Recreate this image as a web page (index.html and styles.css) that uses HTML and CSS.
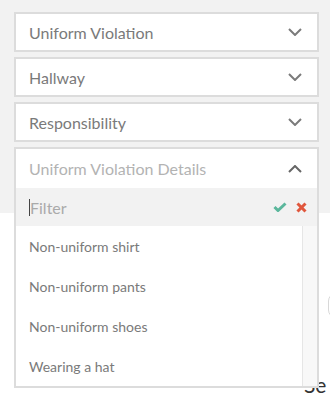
FILE: index.html
```html
<!DOCTYPE html>
<html lang="en">
<head>
  <meta charset="UTF-8">
  <title>Violation Form</title>
  <link rel="stylesheet" href="styles.css">
</head>
<body>
  <div class="form-top">
    <div class="select">
      <span class="select-text">Uniform Violation</span>
      <svg class="chevron" width="14" height="8" viewBox="0 0 14 8"><polyline points="1,1 7,7 13,1"/></svg>
    </div>
    <div class="select">
      <span class="select-text">Hallway</span>
      <svg class="chevron" width="14" height="8" viewBox="0 0 14 8"><polyline points="1,1 7,7 13,1"/></svg>
    </div>
    <div class="select">
      <span class="select-text">Responsibility</span>
      <svg class="chevron" width="14" height="8" viewBox="0 0 14 8"><polyline points="1,1 7,7 13,1"/></svg>
    </div>
    <div class="select open">
      <span class="select-text placeholder">Uniform Violation Details</span>
      <svg class="chevron up" width="14" height="8" viewBox="0 0 14 8"><polyline points="1,7 7,1 13,7"/></svg>

      <div class="dropdown">
        <div class="filter">
          <span class="cursor"></span>
          <span class="filter-text">Filter</span>
          <svg class="ok" width="14" height="10" viewBox="0 0 14 10"><polyline points="1.5,5 5,8.5 12.5,1.5"/></svg>
          <svg class="cancel" width="11" height="11" viewBox="0 0 11 11"><line x1="1.5" y1="1.5" x2="9.5" y2="9.5"/><line x1="9.5" y1="1.5" x2="1.5" y2="9.5"/></svg>
        </div>
        <div class="options">
          <ul class="option-list">
            <li>Non-uniform shirt</li>
            <li>Non-uniform pants</li>
            <li>Non-uniform shoes</li>
            <li>Wearing a hat</li>
          </ul>
          <div class="scrollbar"></div>
        </div>
      </div>
    </div>
  </div>

  <div class="form-rest">
    <div class="round-input"></div>
    <h3 class="section-title">Se</h3>
  </div>
</body>
</html>
```

FILE: styles.css
```css
* { box-sizing: border-box; }

body {
  margin: 0;
  padding: 0;
  background: #ffffff;
  font-family: 'Lato', 'Open Sans', sans-serif;
  overflow: hidden;
}

.form-top {
  background: #f2f2f2;
  padding: 12px 11px 25px 14px;
  display: flex;
  flex-direction: column;
  gap: 5px;
}

.select {
  height: 40px;
  background: #ffffff;
  border: 2px solid #dcdcdc;
  display: flex;
  align-items: center;
  justify-content: space-between;
  padding: 0 15px 0 13px;
}

.select-text {
  font-size: 16px;
  color: #7a7a7a;
}

.select-text.placeholder {
  color: #b3b3b3;
}

.chevron polyline {
  fill: none;
  stroke: #7b7b7b;
  stroke-width: 2;
}

.chevron.up polyline {
  stroke: #666666;
}

.select.open {
  position: relative;
  z-index: 10;
  border-bottom: none;
  height: 41px;
}

.dropdown {
  position: absolute;
  top: 39px;
  left: -2px;
  right: -2px;
  background: #ffffff;
  border: 2px solid #dcdcdc;
  border-top: none;
}

.filter {
  height: 38px;
  background: #f2f2f2;
  display: flex;
  align-items: center;
  padding: 0 10px 0 13px;
}

.cursor {
  width: 1px;
  height: 17px;
  background: #444444;
}

.filter-text {
  flex: 1;
  font-size: 16px;
  color: #aaaaaa;
}

.ok polyline {
  fill: none;
  stroke: #5bb79c;
  stroke-width: 3;
}

.cancel {
  margin-left: 9px;
}

.cancel line {
  stroke: #e0573d;
  stroke-width: 3;
}

.options {
  display: flex;
  height: 160px;
}

.option-list {
  list-style: none;
  margin: 0;
  padding: 0;
  flex: 1;
}

.option-list li {
  height: 40px;
  display: flex;
  align-items: center;
  padding-left: 13px;
  font-size: 14px;
  color: #7a7a7a;
}

.scrollbar {
  width: 15px;
  background: #f8f8f8;
  border-left: 1px solid #e6e6e6;
}

.form-rest {
  padding: 80px 0 0 304px;
}

.round-input {
  margin-left: 24px;
  width: 40px;
  height: 25px;
  border: 1px solid #d8d8d8;
  border-radius: 8px;
}

.section-title {
  margin: 55px 0 0;
  font-size: 21px;
  font-weight: 400;
  color: #333333;
  line-height: 24px;
}
```
